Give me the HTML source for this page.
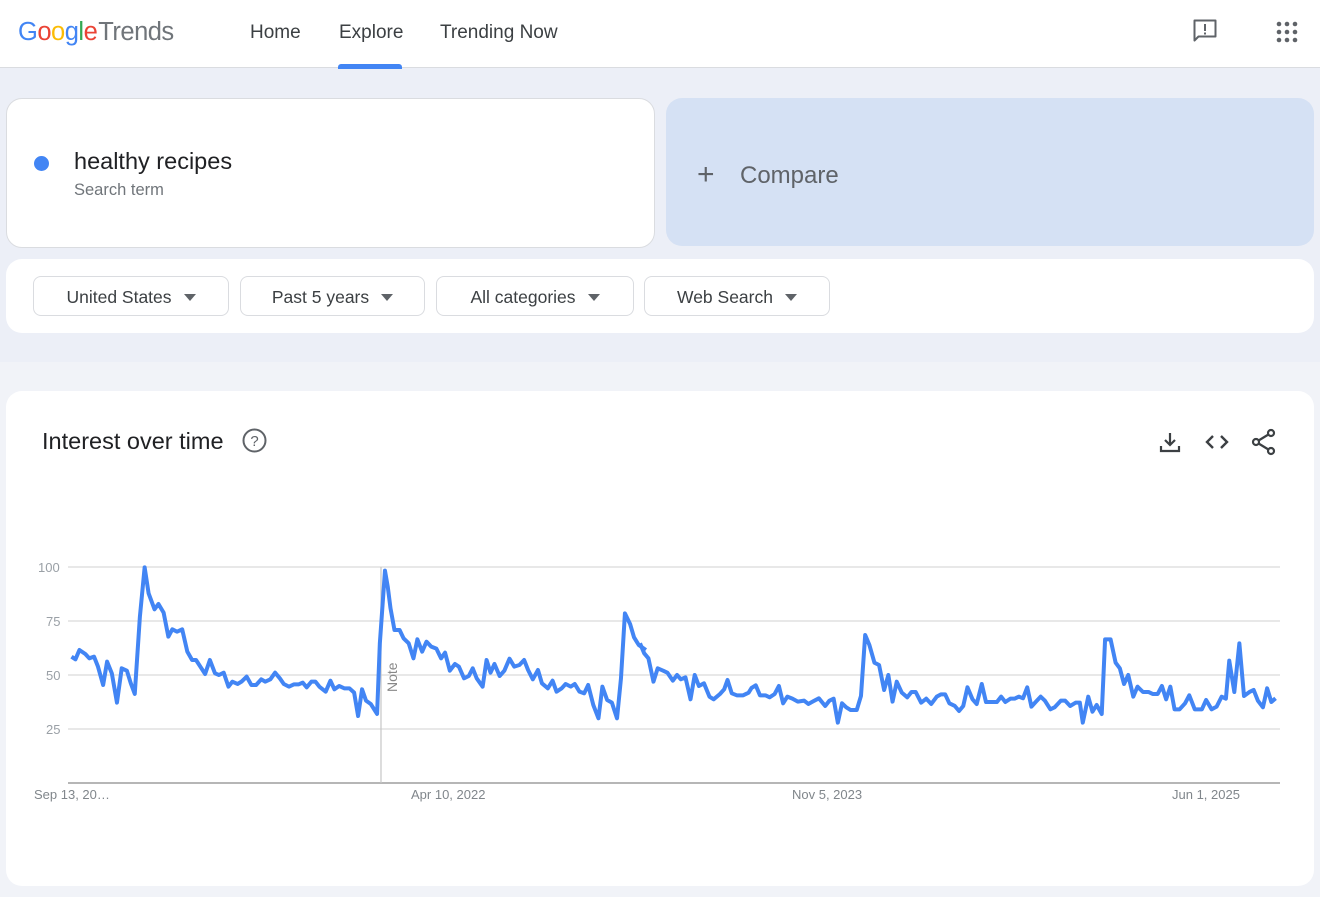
<!DOCTYPE html>
<html><head><meta charset="utf-8"><style>
*{margin:0;padding:0;box-sizing:border-box}
body{width:1320px;height:897px;overflow:hidden;background:#eceff7;font-family:"Liberation Sans",Arial,sans-serif;position:relative}
.hdr{position:absolute;left:0;top:0;width:1320px;height:68px;background:#fff;border-bottom:1px solid #dadce0}
.logo{position:absolute;left:18px;top:18px;font-size:25.5px;letter-spacing:-0.5px}
.nav{position:absolute;top:22px;font-size:19px;color:#3c4043}
.uline{position:absolute;left:338px;top:64px;width:64px;height:5px;background:#4285f4;border-radius:3px 3px 0 0}
.card{position:absolute;background:#fff;border-radius:16px}
.sel{position:absolute;top:276px;height:40px;border:1px solid #dadce0;border-radius:8px;font-size:17.5px;color:#3c4043;display:flex;align-items:center;justify-content:center;gap:12px;padding-top:3px}
.tri{width:0;height:0;border-left:6px solid transparent;border-right:6px solid transparent;border-top:7px solid #5f6368}
.lbl{position:absolute;font-size:13px;color:#9aa0a6}
</style></head><body>
<div style="position:absolute;left:0;top:362px;width:1320px;height:535px;background:#f1f3f8"></div>
<div class="hdr">
<div class="logo"><span style="color:#4285f4">G</span><span style="color:#ea4335">o</span><span style="color:#fbbc05">o</span><span style="color:#4285f4">g</span><span style="color:#34a853">l</span><span style="color:#ea4335">e</span><span style="color:#70757a;margin-left:1px">Trends</span></div>
<div class="nav" style="left:250px">Home</div>
<div class="nav" style="left:339px">Explore</div>
<div class="nav" style="left:440px">Trending Now</div>
<div class="uline"></div>
<svg style="position:absolute;left:1192px;top:18px" width="26" height="26" viewBox="0 0 26 26"><path d="M2.5 2.5h21v16h-17l-4 4z" fill="none" stroke="#5f6368" stroke-width="2" stroke-linejoin="round"/><rect x="12" y="6" width="2" height="7" fill="#5f6368"/><rect x="12" y="14.5" width="2" height="2" fill="#5f6368"/></svg>
<svg style="position:absolute;left:1276px;top:21px" width="22" height="22" viewBox="0 0 22 22" fill="#5f6368"><circle cx="3" cy="3" r="2.3"/><circle cx="11" cy="3" r="2.3"/><circle cx="19" cy="3" r="2.3"/><circle cx="3" cy="11" r="2.3"/><circle cx="11" cy="11" r="2.3"/><circle cx="19" cy="11" r="2.3"/><circle cx="3" cy="19" r="2.3"/><circle cx="11" cy="19" r="2.3"/><circle cx="19" cy="19" r="2.3"/></svg>
</div>
<div class="card" style="left:6px;top:98px;width:649px;height:150px;border:1px solid #dadce0"></div>
<div style="position:absolute;left:34px;top:156px;width:15px;height:15px;border-radius:50%;background:#4285f4"></div>
<div style="position:absolute;left:74px;top:148px;font-size:23.5px;color:#202124">healthy recipes</div>
<div style="position:absolute;left:74px;top:181px;font-size:16.5px;color:#70757a">Search term</div>
<div class="card" style="left:666px;top:98px;width:648px;height:148px;background:#d5e1f4"></div>
<div style="position:absolute;left:697px;top:158px;font-size:30px;color:#5f6368;font-weight:300">+</div>
<div style="position:absolute;left:740px;top:162px;font-size:24px;color:#5f6368">Compare</div>
<div class="card" style="left:6px;top:259px;width:1308px;height:74px"></div>
<div class="sel" style="left:33px;width:196px">United States<span class="tri"></span></div>
<div class="sel" style="left:240px;width:185px">Past 5 years<span class="tri"></span></div>
<div class="sel" style="left:436px;width:198px">All categories<span class="tri"></span></div>
<div class="sel" style="left:644px;width:186px">Web Search<span class="tri"></span></div>
<div class="card" style="left:6px;top:391px;width:1308px;height:495px"></div>
<div style="position:absolute;left:42px;top:428px;font-size:23.5px;color:#202124">Interest over time</div>
<svg style="position:absolute;left:242px;top:428px" width="25" height="25" viewBox="0 0 25 25"><circle cx="12.5" cy="12.5" r="11" fill="none" stroke="#5f6368" stroke-width="2"/><text x="12.5" y="18" text-anchor="middle" font-size="15" fill="#5f6368" font-family="Liberation Sans">?</text></svg>
<svg style="position:absolute;left:1158px;top:430px" width="24" height="24" viewBox="0 0 24 24" fill="none" stroke="#3c4043" stroke-width="2.2"><path d="M12 3v12M7 10l5 5 5-5M3 16v5h18v-5"/></svg>
<svg style="position:absolute;left:1204px;top:430px" width="26" height="24" viewBox="0 0 26 24" fill="none" stroke="#3c4043" stroke-width="2.4"><path d="M9 6l-6 6 6 6M17 6l6 6-6 6"/></svg>
<svg style="position:absolute;left:1251px;top:428px" width="26" height="28" viewBox="0 0 26 28" fill="none" stroke="#3c4043" stroke-width="2.2"><circle cx="20" cy="5" r="3"/><circle cx="5" cy="14" r="3"/><circle cx="20" cy="23" r="3"/><path d="M7.6 12.5l9.8-6M7.6 15.5l9.8 6"/></svg>
<svg style="position:absolute;left:0;top:0" width="1320" height="897">
<g stroke="#e0e0e0" stroke-width="1.5"><line x1="68" y1="567" x2="1280" y2="567"/><line x1="68" y1="621" x2="1280" y2="621"/><line x1="68" y1="675" x2="1280" y2="675"/><line x1="68" y1="729" x2="1280" y2="729"/></g>
<line x1="68" y1="783" x2="1280" y2="783" stroke="#9e9e9e" stroke-width="1.5"/>
<line x1="381" y1="567" x2="381" y2="783" stroke="#c6c6c6" stroke-width="1.2"/>
<text x="397" y="692" transform="rotate(-90 397 692)" font-family="Liberation Sans" font-size="14" fill="#888">Note</text>
<g fill="none" stroke="#4285f4" stroke-width="4" stroke-linejoin="round">
<polyline vector-effect="non-scaling-stroke" transform="translate(30,550) scale(0.3953,0.3333)" points="105,320 115,328 125,300 140,312 150,325 162,320 172,350 185,405 195,335 207,370 220,458 232,355 245,362 255,400 265,432 278,200 290,52 300,130 315,178 325,162 338,188 350,260 360,238 372,245 385,238 398,305 410,330 420,330 432,352 443,372 455,330 468,370 478,375 490,368 502,410 512,395 525,402 535,395 548,380 560,405 572,405 585,388 595,395 608,388 620,368 632,385 642,402 655,410 668,403 680,403 690,398 700,412 712,395 722,395 732,410 748,425 760,392 770,418 782,408 795,415 808,415 820,428 830,498 840,418 850,452 862,462 878,492 885,280 898,62 905,110 912,175 922,240 935,240 945,265 958,280 970,325 980,268 992,305 1003,275 1015,290 1028,296 1040,325 1050,308 1062,362 1075,342 1085,350 1098,385 1110,378 1120,355 1130,385 1145,410 1155,330 1165,368 1175,342 1188,378 1200,362 1213,326 1225,350 1238,345 1250,330 1260,360 1272,388 1285,360 1295,400 1310,415 1322,392 1332,425 1345,415 1355,402 1368,410 1378,402 1390,425 1402,430 1412,405 1425,465 1438,505 1448,410 1460,450 1472,458 1485,505 1495,385 1505,190 1518,222 1528,262 1540,285 1558,300"/>
<polyline vector-effect="non-scaling-stroke" transform="translate(640,550) scale(0.4209,0.3333)" points="0,280 10,310 20,325 32,395 42,355 55,362 65,368 78,392 88,375 97,388 108,382 120,448 130,375 140,408 152,400 165,440 175,448 190,432 200,418 208,390 218,430 230,436 245,436 258,428 265,414 275,406 285,436 298,436 308,442 320,432 330,408 340,460 350,440 362,446 375,455 390,452 400,462 410,455 425,445 440,468 450,452 460,446 470,518 480,460 490,472 500,480 515,480 525,438 535,255 545,285 557,338 568,345 580,420 590,375 600,455 610,395 622,428 635,442 645,426 655,426 668,458 680,446 692,462 705,440 715,433 725,433 735,460 748,468 758,483 768,468 778,412 790,448 800,462 812,402 822,456 835,456 848,456 858,440 868,456 880,446 890,446 900,440 910,445 920,412 930,470 940,456 952,440 962,452 975,478 985,472 1000,452 1010,452 1022,468 1035,458 1045,458 1052,518 1065,440 1075,485 1085,465 1097,492 1105,268 1118,268 1130,338 1140,355 1150,402 1160,375 1172,440 1182,410 1195,426 1208,426 1218,432 1230,432 1240,408 1250,448 1260,410 1270,478 1282,478 1295,460 1305,436 1318,478 1335,478 1345,450 1358,478 1370,470 1382,440 1392,446 1400,332 1412,426 1424,280 1435,438 1448,426 1458,420 1468,452 1480,472 1490,415 1500,456 1510,445"/>
</g>
</svg>
<div class="lbl" style="left:38px;top:560px">100</div>
<div class="lbl" style="left:46px;top:614px">75</div>
<div class="lbl" style="left:46px;top:668px">50</div>
<div class="lbl" style="left:46px;top:722px">25</div>
<div class="lbl" style="left:34px;top:787px;color:#80868b">Sep 13, 20…</div>
<div class="lbl" style="left:411px;top:787px;color:#80868b">Apr 10, 2022</div>
<div class="lbl" style="left:792px;top:787px;color:#80868b">Nov 5, 2023</div>
<div class="lbl" style="left:1172px;top:787px;color:#80868b">Jun 1, 2025</div>
</body></html>
